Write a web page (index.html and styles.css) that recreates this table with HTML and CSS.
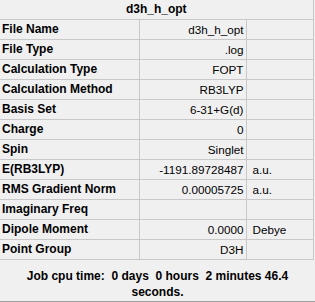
FILE: index.html
```html
<!DOCTYPE html>
<html lang="en">

<head>
    <meta charset="UTF-8">
    <title>d3h_h_opt</title>
    <link rel="stylesheet" href="styles.css">
</head>

<body>
    <div class="summary">
        <table class="props">
            <colgroup>
                <col class="col-key">
                <col class="col-val">
                <col class="col-unit">
            </colgroup>
            <thead>
                <tr>
                    <th colspan="3">d3h_h_opt</th>
                </tr>
            </thead>
            <tbody>
                <tr><td class="key">File Name</td><td class="val">d3h_h_opt</td><td class="unit"></td></tr>
                <tr><td class="key">File Type</td><td class="val">.log</td><td class="unit"></td></tr>
                <tr><td class="key">Calculation Type</td><td class="val">FOPT</td><td class="unit"></td></tr>
                <tr><td class="key">Calculation Method</td><td class="val">RB3LYP</td><td class="unit"></td></tr>
                <tr><td class="key">Basis Set</td><td class="val">6-31+G(d)</td><td class="unit"></td></tr>
                <tr><td class="key">Charge</td><td class="val">0</td><td class="unit"></td></tr>
                <tr><td class="key">Spin</td><td class="val">Singlet</td><td class="unit"></td></tr>
                <tr><td class="key">E(RB3LYP)</td><td class="val">-1191.89728487</td><td class="unit">a.u.</td></tr>
                <tr><td class="key">RMS Gradient Norm</td><td class="val">0.00005725</td><td class="unit">a.u.</td></tr>
                <tr><td class="key">Imaginary Freq</td><td class="val"></td><td class="unit"></td></tr>
                <tr><td class="key">Dipole Moment</td><td class="val">0.0000</td><td class="unit">Debye</td></tr>
                <tr><td class="key">Point Group</td><td class="val">D3H</td><td class="unit"></td></tr>
            </tbody>
        </table>

        <div class="cpu">Job cpu time:&nbsp; 0 days&nbsp; 0 hours&nbsp; 2 minutes 46.4 seconds.</div>
    </div>
</body>

</html>
```

FILE: styles.css
```css
* {
    margin: 0;
    padding: 0;
    box-sizing: border-box;
}

body {
    background-color: #f0f0f0;
    color: #000;
    font-family: "Liberation Sans", Arial, sans-serif;
    font-size: 11.7px;
}

.summary {
    width: 315px;
    height: 302px;
    border-bottom: 1px solid #a0a0a0;
}

.props {
    border-collapse: collapse;
    width: 313px;
    table-layout: fixed;
}

.col-key {
    width: 139px;
}

.col-val {
    width: 107px;
}

.col-unit {
    width: 67px;
}

.props th {
    height: 19px;
    font-size: 12px;
    font-weight: bold;
    text-align: center;
    border-bottom: 1px solid #c8c8c8;
    border-right: 1px solid #c8c8c8;
}

.props td {
    height: 20px;
    border-bottom: 1px solid #c8c8c8;
    border-right: 1px solid #c8c8c8;
    white-space: nowrap;
    overflow: hidden;
}

.props .key {
    padding-left: 2px;
    font-size: 12px;
    font-weight: bold;
}

.props .val {
    padding-right: 2px;
    text-align: right;
}

.props .unit {
    padding-left: 6px;
}

.cpu {
    padding: 8px 24px 0 24px;
    font-size: 12px;
    font-weight: bold;
    line-height: 16px;
    text-align: center;
}
```
